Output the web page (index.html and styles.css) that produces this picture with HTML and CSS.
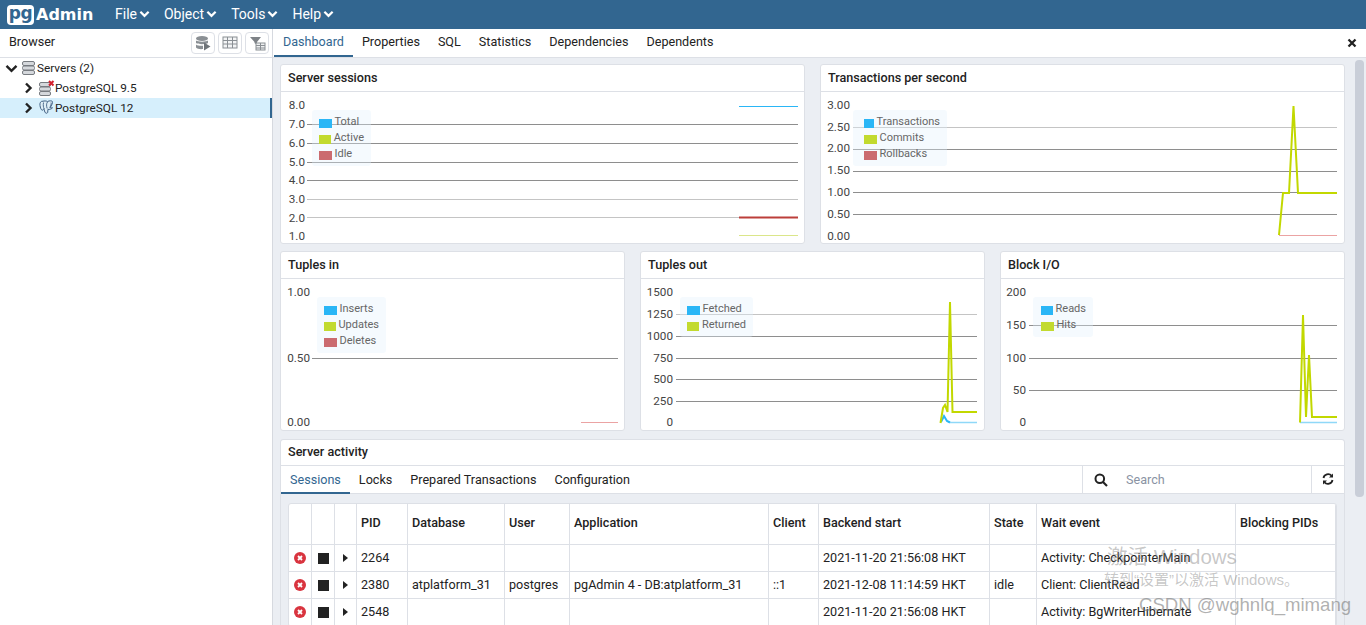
FILE: index.html
```html
<!DOCTYPE html>
<html lang="en">
<head>
<meta charset="utf-8">
<title>pgAdmin 4</title>
<link rel="stylesheet" href="styles.css">
</head>
<body>
<header class="navbar">
  <div class="logo"><span class="logo-pg">pg</span><span class="logo-admin">Admin</span></div>
  <nav class="menu">
    <span class="menu-item">File<svg class="menu-chev" viewBox="0 0 12 8"><path d="M1.500 1.500 6 6l4.500-4.500"/></svg></span>
    <span class="menu-item">Object<svg class="menu-chev" viewBox="0 0 12 8"><path d="M1.500 1.500 6 6l4.500-4.500"/></svg></span>
    <span class="menu-item">Tools<svg class="menu-chev" viewBox="0 0 12 8"><path d="M1.500 1.500 6 6l4.500-4.500"/></svg></span>
    <span class="menu-item">Help<svg class="menu-chev" viewBox="0 0 12 8"><path d="M1.500 1.500 6 6l4.500-4.500"/></svg></span>
  </nav>
</header>
<div class="app">
  <aside class="sidebar">
    <div class="side-head">
      <span class="side-title">Browser</span>
      <div class="side-tools">
        <button class="tool"><svg width="16" height="16" viewBox="0 0 16 16"><g fill="#8a8f94"><ellipse cx="7" cy="3.500" rx="6" ry="2.500"/><path d="M1 5.500c1.500 1.500 10.500 1.500 12 0v2.500c-1.500 1.600-10.500 1.600-12 0zM1 9.500c1.500 1.500 6 1.500 7 1.200v3.300c-2 .4-6 .1-7-1.500z"/><path d="M9 7.500 15.500 11.500 9 15.500z" fill="#6f7479"/></g></svg></button>
        <button class="tool"><svg width="16" height="14" viewBox="0 0 16 14"><rect x="1" y="1" width="14" height="11" fill="#f3f4f5" stroke="#8a8f94"/><path d="M1 4.500h14M1 8h14M5.500 1v11M10.500 1v11" stroke="#8a8f94" fill="none"/></svg></button>
        <button class="tool"><svg width="17" height="16" viewBox="0 0 17 16"><path d="M1 2h11L8 7v3L5.500 8V7z" fill="#7d8287"/><rect x="7" y="8" width="9" height="7" fill="#eef0f1" stroke="#8a8f94"/><path d="M7 10.500h9M7 13h9M11.500 8v7" stroke="#8a8f94"/></svg></button>
      </div>
    </div>
    <div class="tree">
      <div class="tree-row lvl0">
        <svg class="tree-chev" width="13" height="9" viewBox="0 0 13 9"><path d="M1.500 1.800 6.500 6.800 11.500 1.800" fill="none" stroke="#222" stroke-width="2.400"/></svg>
        <svg class="srv-icon" width="13" height="14" viewBox="0 0 13 14"><g fill="#d5d8dc" stroke="#777b80"><rect x=".5" y=".5" width="12" height="4" rx="1.500"/><rect x=".5" y="5" width="12" height="4" rx="1.500"/><rect x=".5" y="9.500" width="12" height="4" rx="1.500"/></g></svg>
        <span>Servers (2)</span>
      </div>
      <div class="tree-row lvl1">
        <svg class="tree-chev-r" width="9" height="12" viewBox="0 0 9 12"><path d="M2 1.500 6.500 6 2 10.500" fill="none" stroke="#222" stroke-width="2.400"/></svg>
        <svg class="db-icon" width="16" height="16" viewBox="0 0 16 16"><g fill="#d5d8dc" stroke="#777b80"><rect x=".5" y="2.500" width="11" height="4" rx="1.500"/><rect x=".5" y="7" width="11" height="4" rx="1.500"/><rect x=".5" y="11.500" width="11" height="4" rx="1.500"/></g><path d="M10 1 14.500 5.500M14.500 1 10 5.500" stroke="#d4202c" stroke-width="2"/></svg>
        <span>PostgreSQL 9.5</span>
      </div>
      <div class="tree-row lvl1 selected">
        <svg class="tree-chev-r" width="9" height="12" viewBox="0 0 9 12"><path d="M2 1.500 6.500 6 2 10.500" fill="none" stroke="#222" stroke-width="2.400"/></svg>
        <svg class="db-icon" width="16" height="16" viewBox="0 0 16 16"><path d="M4 1.200C1.500 1 .6 3 1 5.500c.3 2 1 4.500 2.200 4.700.8.100 1.300-1 1.800-1.700.2 1.800.7 3.400 1.400 4.300.6.700 2 .6 2.300-.4.200-.8.100-2 .2-3 1.500.2 3.800-.4 4.600-1.600-.8.100-2 .2-2.400-.2 1.400-2 3-5 2.200-6.200C13 .8 10.500.5 8.500 1.500 7 .8 5.300.9 4 1.200z" fill="#dfeef7" stroke="#3f5f82" stroke-width="1"/><path d="M4.500 2.500C4 5 4.400 7.500 5 8.500M8.500 2c-1.200 1.500-1.200 4-.3 6.500M12 2.500c.6 1.500-.3 3.600-1.300 5" fill="none" stroke="#3f5f82" stroke-width=".9"/></svg>
        <span>PostgreSQL 12</span>
      </div>
    </div>
  </aside>
  <main class="main">
    <div class="tabs">
      <span class="tab active">Dashboard</span>
      <span class="tab">Properties</span>
      <span class="tab">SQL</span>
      <span class="tab">Statistics</span>
      <span class="tab">Dependencies</span>
      <span class="tab">Dependents</span>
      <svg class="tab-close" width="10" height="10" viewBox="0 0 10 10"><path d="M1.500 1.500 8.500 8.500M8.500 1.500 1.500 8.500" stroke="#222" stroke-width="2.300"/></svg>
    </div>
    <div class="dash">
      <div class="dash-content">
        <div class="row row-top">
          <section class="card">
            <h3 class="card-head">Server sessions</h3>
            <div class="chart">
              <svg class="plot" viewBox="280 92 525 152">
                <g class="grid"><path d="M307 124.500H798M307 143.500H798M307 162.500H798M307 180.500H798"/><path class="soft" d="M307 199.500H798M307 217.500H798"/></g>
                <g class="ticks"><text x="305" y="109">8.0</text><text x="305" y="128">7.0</text><text x="305" y="147">6.0</text><text x="305" y="166">5.0</text><text x="305" y="184">4.0</text><text x="305" y="203">3.0</text><text x="305" y="222">2.0</text><text x="305" y="240">1.0</text></g>
                <path d="M739 106.500H798" class="ln blue"/><path d="M739 217.500H798" class="ln red-d"/><path d="M739 235.500H798" class="ln lime-p"/>
              </svg>
              <div class="legend lg-sessions">
                <div class="lg-row"><i class="sw sw-blue"></i>Total</div>
                <div class="lg-row"><i class="sw sw-lime"></i>Active</div>
                <div class="lg-row"><i class="sw sw-red"></i>Idle</div>
              </div>
            </div>
          </section>
          <section class="card">
            <h3 class="card-head">Transactions per second</h3>
            <div class="chart">
              <svg class="plot" viewBox="820 92 525 152">
                <g class="grid"><path class="soft" d="M853 127.500H1337"/><path d="M853 149.500H1337M853 171.500H1337M853 192.500H1337M853 214.500H1337"/></g>
                <g class="ticks"><text x="850" y="109">3.00</text><text x="850" y="131">2.50</text><text x="850" y="152">2.00</text><text x="850" y="174">1.50</text><text x="850" y="196">1.00</text><text x="850" y="218">0.50</text><text x="850" y="240">0.00</text></g>
                <path d="M1279 235.500H1337" class="ln red-p"/>
                <path d="M1279 235 1283 193H1289L1293.500 106 1298 193H1337" class="ln lime"/>
              </svg>
              <div class="legend lg-trans">
                <div class="lg-row"><i class="sw sw-blue"></i>Transactions</div>
                <div class="lg-row"><i class="sw sw-lime"></i>Commits</div>
                <div class="lg-row"><i class="sw sw-red"></i>Rollbacks</div>
              </div>
            </div>
          </section>
        </div>
        <div class="row">
          <section class="card">
            <h3 class="card-head">Tuples in</h3>
            <div class="chart">
              <svg class="plot" viewBox="280 279 345 152">
                <g class="grid"><path d="M312 358.500H618"/></g>
                <g class="ticks"><text x="310" y="296">1.00</text><text x="310" y="362">0.50</text><text x="310" y="426">0.00</text></g>
                <path d="M581 422.500H618" class="ln red-p"/>
              </svg>
              <div class="legend lg-in">
                <div class="lg-row"><i class="sw sw-blue"></i>Inserts</div>
                <div class="lg-row"><i class="sw sw-lime"></i>Updates</div>
                <div class="lg-row"><i class="sw sw-red"></i>Deletes</div>
              </div>
            </div>
          </section>
          <section class="card">
            <h3 class="card-head">Tuples out</h3>
            <div class="chart">
              <svg class="plot" viewBox="640 279 345 152">
                <g class="grid"><path class="soft" d="M676 314.500H977"/><path d="M676 336.500H977M676 358.500H977M676 379.500H977M676 401.500H977"/></g>
                <g class="ticks"><text x="673" y="296">1500</text><text x="673" y="318">1250</text><text x="673" y="340">1000</text><text x="673" y="362">750</text><text x="673" y="383">500</text><text x="673" y="405">250</text><text x="673" y="426">0</text></g>
                <path d="M950 422.500H977" class="ln blue-p"/>
                <path d="M941 422 944 416 947 421 950 422.500" class="ln blue-w"/>
                <path d="M940.500 423 943 408 945 405 947.500 412 950 302 952.500 412H977" class="ln lime"/>
              </svg>
              <div class="legend lg-out">
                <div class="lg-row"><i class="sw sw-blue"></i>Fetched</div>
                <div class="lg-row"><i class="sw sw-lime"></i>Returned</div>
              </div>
            </div>
          </section>
          <section class="card">
            <h3 class="card-head">Block I/O</h3>
            <div class="chart">
              <svg class="plot" viewBox="1000 279 345 152">
                <g class="grid"><path d="M1029 325.500H1337M1029 358.500H1337M1029 390.500H1337"/></g>
                <g class="ticks"><text x="1026" y="296">200</text><text x="1026" y="329">150</text><text x="1026" y="362">100</text><text x="1026" y="394">50</text><text x="1026" y="426">0</text></g>
                <path d="M1300 422.500H1337" class="ln blue-p"/>
                <path d="M1300 422.500 1303 315 1306 417 1309 355 1312 417H1337" class="ln lime"/>
              </svg>
              <div class="legend lg-io">
                <div class="lg-row"><i class="sw sw-blue"></i>Reads</div>
                <div class="lg-row"><i class="sw sw-lime"></i>Hits</div>
              </div>
            </div>
          </section>
        </div>
        <section class="card activity">
          <h3 class="card-head">Server activity</h3>
          <div class="subbar">
            <span class="subtab active">Sessions</span>
            <span class="subtab">Locks</span>
            <span class="subtab">Prepared Transactions</span>
            <span class="subtab">Configuration</span>
            <div class="searchbox">
              <svg class="search-icon" width="14" height="14" viewBox="0 0 14 14"><circle cx="5.800" cy="5.800" r="4.300" fill="none" stroke="#222" stroke-width="2"/><path d="M9 9l4 4" stroke="#222" stroke-width="2.200"/></svg>
              <span class="search-ph">Search</span>
            </div>
            <div class="refresh">
              <svg width="12" height="12" viewBox="0 0 12 12"><path d="M1.500 5A4.600 4.600 0 0 1 9.600 2.800M10.500 7A4.600 4.600 0 0 1 2.400 9.200" fill="none" stroke="#222" stroke-width="1.800"/><path d="M11 .5V4.500H7zM1 11.500V7.500H5z" fill="#222"/></svg>
            </div>
          </div>
          <div class="grid-wrap">
            <table class="sess">
              <colgroup><col class="c1"><col class="c2"><col class="c3"><col class="c4"><col class="c5"><col class="c6"><col class="c7"><col class="c8"><col class="c9"><col class="c10"><col class="c11"><col class="c12"></colgroup>
              <thead><tr><th></th><th></th><th></th><th>PID</th><th>Database</th><th>User</th><th>Application</th><th>Client</th><th>Backend start</th><th>State</th><th>Wait event</th><th>Blocking PIDs</th></tr></thead>
              <tbody>
                <tr><td class="ic"><svg class="x-ic" viewBox="0 0 12 12"><circle cx="6" cy="6" r="6" fill="#d9343f"/><path d="M4 4l4 4M8 4l-4 4" stroke="#fff" stroke-width="1.800"/></svg></td><td class="ic"><i class="stop"></i></td><td class="ic"><i class="caret"></i></td><td>2264</td><td></td><td></td><td></td><td></td><td>2021-11-20 21:56:08 HKT</td><td></td><td>Activity: CheckpointerMain</td><td></td></tr>
                <tr><td class="ic"><svg class="x-ic" viewBox="0 0 12 12"><circle cx="6" cy="6" r="6" fill="#d9343f"/><path d="M4 4l4 4M8 4l-4 4" stroke="#fff" stroke-width="1.800"/></svg></td><td class="ic"><i class="stop"></i></td><td class="ic"><i class="caret"></i></td><td>2380</td><td>atplatform_31</td><td>postgres</td><td>pgAdmin 4 - DB:atplatform_31</td><td>::1</td><td>2021-12-08 11:14:59 HKT</td><td>idle</td><td>Client: ClientRead</td><td></td></tr>
                <tr><td class="ic"><svg class="x-ic" viewBox="0 0 12 12"><circle cx="6" cy="6" r="6" fill="#d9343f"/><path d="M4 4l4 4M8 4l-4 4" stroke="#fff" stroke-width="1.800"/></svg></td><td class="ic"><i class="stop"></i></td><td class="ic"><i class="caret"></i></td><td>2548</td><td></td><td></td><td></td><td></td><td>2021-11-20 21:56:08 HKT</td><td></td><td>Activity: BgWriterHibernate</td><td></td></tr>
              </tbody>
            </table>
          </div>
        </section>
      </div>
      <div class="scroll-track"><div class="scroll-thumb"></div></div>
    </div>
  </main>
</div>
<div class="wm wm-a">激活 Windows</div>
<div class="wm wm-b">转到“设置”以激活 Windows。</div>
<div class="wm wm-c">CSDN @wghnlq_mimang</div>
</body>
</html>
```
FILE: styles.css
```css
* { box-sizing: border-box; }
html, body { margin: 0; height: 625px; overflow: hidden; }
body { position: relative; display: flex; flex-direction: column; font: 12.600px/1.2 Roboto, "Noto Sans CJK SC", sans-serif; color: #222; background: #fff; }
.navbar { height: 29px; flex: none; display: flex; align-items: center; background: #326690; color: #fff; }
.logo { display: flex; align-items: center; margin-left: 7px; width: 108px; }
.logo-pg { width: 27px; height: 20px; background: #fff; border-radius: 4px; color: #326690; font: 700 17px/16px "DejaVu Sans", sans-serif; text-align: center; letter-spacing: -0.5px; }
.logo-admin { margin-left: 2px; font: 700 16px/20px "DejaVu Sans", sans-serif; color: #fff; }
.menu { display: flex; font-size: 14px; }
.menu-item { display: flex; align-items: center; margin-right: 14px; gap: 2px; }
.menu-chev { width: 11px; height: 8px; fill: none; stroke: #fff; stroke-width: 2.400; }
.app { flex: 1; display: flex; min-height: 0; }
.sidebar { width: 273px; flex: none; border-right: 1px solid #d6d9df; }
.side-head { height: 29px; display: flex; align-items: center; justify-content: space-between; padding: 0 3px 0 9px; border-bottom: 1px solid #dde0e6; }
.side-title { padding-bottom: 2px; }
.side-tools { display: flex; gap: 3px; }
.tool { width: 24px; height: 22px; padding: 0; display: flex; align-items: center; justify-content: center; background: #fff; border: 1px solid #dde0e6; border-radius: 4px; }
.tree { font-size: 11.800px; }
.tree-row { height: 20px; display: flex; align-items: center; }
.lvl0 { padding-left: 5px; }
.lvl1 { padding-left: 24px; }
.srv-icon { margin: 0 2px 0 4px; }
.tree-chev-r { margin-right: 6px; }
.selected { background: #d6effc; border-right: 2px solid #326690; }
.main { flex: 1; min-width: 0; display: flex; flex-direction: column; }
.tabs { height: 29px; flex: none; display: flex; align-items: stretch; padding-right: 9px; border-bottom: 1px solid #dde0e6; }
.tab { padding: 0 9px; line-height: 26px; border-bottom: 2px solid transparent; height: 28px; }
.tab.active { color: #326690; border-bottom-color: #326690; margin-left: 1px; }
.tab-close { margin: 9px 0 0 auto; }
.dash { flex: 1; min-height: 0; display: flex; background: #ebeef3; overflow: hidden; }
.dash-content { width: 1072px; flex: none; padding: 6px 0 0 7px; display: flex; flex-direction: column; gap: 8px; }
.row { display: flex; gap: 15px; }
.row-top { margin-bottom: -1px; }
.card { flex: 1; min-width: 0; background: #fff; border: 1px solid #dde0e6; border-radius: 3px; }
.card-head { margin: 0; height: 27px; padding: 0 7px; font-size: 12.600px; font-weight: 500; line-height: 25px; border-bottom: 1px solid #dde0e6; color: #222; }
.chart { position: relative; height: 152px; margin: 0 -1px -1px; }
.plot { display: block; width: 100%; height: 152px; }
.grid path { stroke: #8e8e8e; fill: none; }
.grid .soft { stroke: #c4c4c4; }
.ticks text { font: 11.700px Roboto, sans-serif; fill: #444; text-anchor: end; }
.ln { fill: none; stroke-width: 1; }
.blue { stroke: #2ab6f6; }
.blue-p { stroke: #8fd8f8; stroke-width: 1.500; }
.blue-w { stroke: #2ab6f6; stroke-width: 2; }
.lime { stroke: #c2d800; stroke-width: 2; }
.lime-p { stroke: #dbe68a; }
.red-d { stroke: #bc3f3a; stroke-width: 2; }
.red-p { stroke: #eba3a3; }
.legend { position: absolute; top: 18px; padding: 4px 7px 0; background: rgba(225, 240, 252, 0.35); border-radius: 3px; color: #666; font-size: 11px; }
.lg-row { display: flex; align-items: center; height: 16px; white-space: nowrap; }
.sw { width: 13px; height: 9px; margin: 2px 2.500px 0 0; }
.sw-blue { background: #2ab6f6; }
.sw-lime { background: #c2da2f; }
.sw-red { background: #cb6b6f; }
.lg-sessions { left: 32px; width: 59px; height: 56px; }
.lg-trans { left: 33px; width: 94px; height: 56px; padding-left: 11px; }
.lg-in { left: 37px; width: 69px; height: 56px; }
.lg-out { left: 40px; width: 73px; height: 40px; }
.lg-io { left: 33px; width: 60px; height: 40px; padding-left: 8px; }
.activity { flex: none; height: 240px; background: #ebeef3; }
.activity .card-head { height: 26px; line-height: 24px; background: #fff; border-radius: 3px 3px 0 0; }
.subbar { height: 28px; display: flex; background: #fff; border-bottom: 1px solid #dde0e6; }
.subtab { padding: 0 9px; line-height: 27px; height: 28px; }
.subtab.active { color: #326690; border-bottom: 2px solid #326690; }
.searchbox { margin-left: auto; width: 229px; display: flex; align-items: center; border-left: 1px solid #dde0e6; }
.search-icon { margin-left: 11px; }
.search-ph { margin-left: 18px; color: #8a93a3; }
.refresh { width: 33px; display: flex; align-items: center; justify-content: center; border-left: 1px solid #dde0e6; padding-bottom: 2px; }
.grid-wrap { margin: 9px 7px 0; background: #fff; border: 1px solid #dde0e6; border-radius: 3px; overflow: hidden; }
.sess { width: 1047px; table-layout: fixed; border-collapse: collapse; margin: -1px 0 0 -1px; }
.c1 { width: 23px; } .c2 { width: 23px; } .c3 { width: 22px; } .c4 { width: 51px; } .c5 { width: 97px; } .c6 { width: 65px; }
.c7 { width: 199px; } .c8 { width: 50px; } .c9 { width: 171px; } .c10 { width: 47px; } .c11 { width: 199px; } .c12 { width: 100px; }
.sess th, .sess td { border: 1px solid #dde0e6; padding: 0 4px; text-align: left; white-space: nowrap; overflow: hidden; }
.sess th { height: 41px; padding-bottom: 2px; font-weight: 500; }
.sess td { height: 27px; }
.sess .ic { padding: 0; text-align: center; }
.x-ic { display: block; width: 12px; height: 12px; margin: 0 auto; }
.stop { display: block; width: 11px; height: 11px; margin: 0 auto; background: #222; }
.caret { display: block; width: 0; height: 0; margin: 0 auto; border-left: 5px solid #222; border-top: 4px solid transparent; border-bottom: 4px solid transparent; }
.scroll-track { flex: 1; position: relative; }
.scroll-thumb { position: absolute; left: 10px; top: 2px; width: 9px; height: 437px; background: #c9ced8; border-radius: 4px; }
.wm { position: absolute; white-space: nowrap; color: rgba(130, 130, 130, 0.45); pointer-events: none; font-family: "Liberation Sans", "Noto Sans CJK SC", sans-serif; }
.wm-a { left: 1107px; top: 545px; font-size: 20.500px; }
.wm-b { left: 1104px; top: 571px; font-size: 15px; }
.wm-c { left: 1139px; top: 594px; font-size: 18.600px; color: rgba(110, 110, 110, 0.55); }
```
